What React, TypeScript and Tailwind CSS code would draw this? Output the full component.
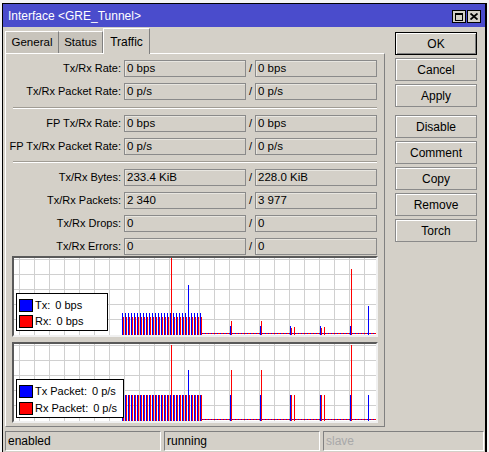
import React from "react";

type Bar = { x: number; top: number; c: "b" | "r" };

function makeBars(
  dense: { bTop: number; rTop: number; rSpike: number; bSpike: number },
  small: Bar[]
): Bar[] {
  const bars: Bar[] = [];
  for (let k = 0; k < 27; k++) {
    bars.push({ x: 108 + 3 * k, top: k === 22 ? dense.bSpike : dense.bTop, c: "b" });
    bars.push({ x: 109 + 3 * k, top: k === 16 ? dense.rSpike : dense.rTop, c: "r" });
  }
  return bars.concat(small);
}

const bars1 = makeBars(
  { bTop: 55, rTop: 59, rSpike: 0, bSpike: 27 },
  [
    { x: 216, top: 68, c: "b" },
    { x: 217, top: 63, c: "r" },
    { x: 246, top: 68, c: "b" },
    { x: 247, top: 63, c: "r" },
    { x: 276, top: 68, c: "b" },
    { x: 277, top: 70, c: "r" },
    { x: 280, top: 69, c: "r" },
    { x: 306, top: 68, c: "b" },
    { x: 307, top: 70, c: "r" },
    { x: 310, top: 69, c: "r" },
    { x: 336, top: 68, c: "b" },
    { x: 337, top: 11, c: "r" },
    { x: 354, top: 48, c: "b" },
  ]
);

const bars2 = makeBars(
  { bTop: 51, rTop: 51, rSpike: 1, bSpike: 26 },
  [
    { x: 216, top: 51, c: "b" },
    { x: 217, top: 26, c: "r" },
    { x: 246, top: 51, c: "b" },
    { x: 247, top: 26, c: "r" },
    { x: 276, top: 51, c: "b" },
    { x: 277, top: 51, c: "r" },
    { x: 280, top: 51, c: "r" },
    { x: 306, top: 51, c: "b" },
    { x: 307, top: 51, c: "r" },
    { x: 310, top: 51, c: "r" },
    { x: 336, top: 51, c: "b" },
    { x: 337, top: 1, c: "r" },
    { x: 354, top: 51, c: "b" },
  ]
);

function Chart({
  bars,
  legend,
}: {
  bars: Bar[];
  legend: { rows: [string, string][]; w: number; h: number; pitch: number };
}) {
  const W = 362;
  const H = 77;
  const vlines: number[] = [];
  for (let x = 5; x < W; x += 15) vlines.push(x);
  const hlines: number[] = [];
  for (let y = 1; y < H - 2; y += 15) hlines.push(y);
  return (
    <div className="ml-[6px] w-[366px] border-t-2 border-l-2 border-b-2 border-r-2 border-t-[#5a5a5a] border-l-[#5a5a5a] border-b-[#f0f0f0] border-r-[#f0f0f0]">
      <div className="relative h-[77px] w-[362px] bg-white">
        <svg width={W} height={H} className="block">
          {vlines.map((x) => (
            <rect key={"v" + x} x={x} y={0} width={1} height={H} fill="#d0d0d0" />
          ))}
          {hlines.map((y) => (
            <rect key={"h" + y} x={0} y={y} width={W} height={1} fill="#d0d0d0" />
          ))}
          <rect x={188} y={75} width={174} height={1} fill="#0000ff" />
          {Array.from({ length: 58 }).map((_, i) => (
            <rect key={"d" + i} x={189 + i * 3} y={75} width={2} height={1} fill="#ff0000" />
          ))}
          {bars.map((b, i) => (
            <rect
              key={i}
              x={b.x}
              y={b.top}
              width={1}
              height={H - b.top}
              fill={b.c === "b" ? "#0000ff" : "#ff0000"}
            />
          ))}
        </svg>
        <div
          className="absolute left-[2px] top-[35px] border border-black bg-white pl-[2px] pt-[3px]"
          style={{ width: legend.w, height: legend.h }}
        >
          {legend.rows.map(([label, val], i) => (
            <div
              key={i}
              className="flex items-center"
              style={{ height: legend.pitch }}
            >
              <div
                className={
                  "h-[13px] w-[14px] border border-black " +
                  (i === 0 ? "bg-[#0000ff]" : "bg-[#ff0000]")
                }
              />
              <span className="ml-[2px] whitespace-pre text-[11px] leading-none text-black">
                {label}
              </span>
              <span className="ml-[5px] whitespace-pre text-[11px] leading-none text-black">
                {val}
              </span>
            </div>
          ))}
        </div>
      </div>
    </div>
  );
}

function Field({ children }: { children?: React.ReactNode }) {
  return (
    <div className="flex h-[17px] w-[122px] items-center border border-[#8a8a8a] bg-[#d4d0c8] pl-[2px] text-[11.5px] text-black shadow-[inset_1px_1px_0_#e8e6e0]">
      {children}
    </div>
  );
}

function Row({ label, a, b, mt }: { label: string; a: string; b: string; mt: string }) {
  return (
    <div className={"flex h-[17px] items-center " + mt}>
      <div className="w-[115px] text-right text-black">{label}</div>
      <div className="w-[3px]" />
      <Field>{a}</Field>
      <div className="flex w-[9px] justify-center text-black">/</div>
      <Field>{b}</Field>
    </div>
  );
}

function Sep({ mt }: { mt: string }) {
  return (
    <div className={"ml-[7px] w-[364px] " + mt}>
      <div className="h-[1px] bg-[#a09c94]" />
      <div className="h-[1px] bg-white" />
    </div>
  );
}

function Btn({ label, def, mt }: { label: string; def?: boolean; mt?: string }) {
  return (
    <div
      className={
        "flex h-[23px] w-[82px] items-center justify-center bg-[#d4d0c8] text-black " +
        (def
          ? "border border-black shadow-[inset_1px_1px_0_#ffffff,inset_-1px_-1px_0_#808080]"
          : "border border-[#8a8a8a] shadow-[inset_1px_1px_0_#ffffff]") +
        " " +
        (mt || "")
      }
    >
      {label}
    </div>
  );
}

export default function App() {
  return (
    <div className="h-[452px] w-[489px] overflow-hidden bg-[#f4f4f4] pt-[3px] font-['Liberation_Sans',Arial,sans-serif] text-[11px]">
      <div className="ml-[2px] flex h-[449px] w-[485px] flex-col border-t border-l border-r-2 border-black bg-[#d4d0c8]">
        {/* title bar */}
        <div className="flex h-[23px] items-center bg-[#4a4ccc] pl-[5px]">
          <span className="text-[12px] text-white">Interface &lt;GRE_Tunnel&gt;</span>
          <div className="ml-auto mr-[4px] mt-[2px] flex gap-[1px]">
            <div className="flex h-[13px] w-[14px] items-center justify-center border border-black bg-[#d4d0c8]">
              <div className="h-[8px] w-[8px] border border-black border-t-2" />
            </div>
            <div className="flex h-[13px] w-[14px] items-center justify-center border border-black bg-[#d4d0c8]">
              <svg width="8" height="7" viewBox="0 0 8 7">
                <path d="M0.5 0.5 L7.5 6.5 M7.5 0.5 L0.5 6.5" stroke="#000" strokeWidth="1.8" />
              </svg>
            </div>
          </div>
        </div>

        <div className="flex pl-[2px]">
          {/* left column */}
          <div className="flex w-[380px] flex-col">
            <div className="flex h-[26px] items-end">
              <div className="flex h-[22px] w-[54px] items-center justify-center border-t border-l border-t-white border-l-white border-r border-r-[#808080] bg-[#c8c4bc] text-[11.5px] text-black">
                General
              </div>
              <div className="flex h-[22px] w-[44px] items-center justify-center border-t border-t-white border-r border-r-[#808080] bg-[#c8c4bc] text-[11.5px] text-black">
                Status
              </div>
              <div className="relative z-10 -mb-[1px] flex h-[26px] w-[47px] items-start justify-center border-t border-l border-r border-t-white border-l-white border-r-[#808080] bg-[#d4d0c8] pt-[4px] text-[12px] text-black">
                Traffic
              </div>
            </div>
            <div className="flex h-[374px] flex-col border border-t-white border-l-white border-r-[#808080] border-b-[#808080] pt-[6px]">
              <Row label="Tx/Rx Rate:" a="0 bps" b="0 bps" mt="" />
              <Row label="Tx/Rx Packet Rate:" a="0 p/s" b="0 p/s" mt="mt-[6px]" />
              <Sep mt="mt-[7px]" />
              <Row label="FP Tx/Rx Rate:" a="0 bps" b="0 bps" mt="mt-[6px]" />
              <Row label="FP Tx/Rx Packet Rate:" a="0 p/s" b="0 p/s" mt="mt-[6px]" />
              <Sep mt="mt-[6px]" />
              <Row label="Tx/Rx Bytes:" a="233.4 KiB" b="228.0 KiB" mt="mt-[6px]" />
              <Row label="Tx/Rx Packets:" a="2 340" b="3 977" mt="mt-[6px]" />
              <Row label="Tx/Rx Drops:" a="0" b="0" mt="mt-[6px]" />
              <Row label="Tx/Rx Errors:" a="0" b="0" mt="mt-[6px]" />
              <div className="mt-[1px]">
                <Chart
                  bars={bars1}
                  legend={{
                    rows: [
                      ["Tx:", "0 bps"],
                      ["Rx:", "0 bps"],
                    ],
                    w: 92,
                    h: 38,
                    pitch: 16,
                  }}
                />
              </div>
              <div className="mt-[5px]">
                <Chart
                  bars={bars2}
                  legend={{
                    rows: [
                      ["Tx Packet:", "0 p/s"],
                      ["Rx Packet:", "0 p/s"],
                    ],
                    w: 108,
                    h: 39,
                    pitch: 17,
                  }}
                />
              </div>
            </div>
          </div>
          {/* right column */}
          <div className="ml-[10px] flex flex-col gap-[3px] pt-[5px] text-[12px]">
            <Btn label="OK" def />
            <Btn label="Cancel" />
            <Btn label="Apply" />
            <Btn label="Disable" mt="mt-[5px]" />
            <Btn label="Comment" />
            <Btn label="Copy" />
            <Btn label="Remove" />
            <Btn label="Torch" />
          </div>
        </div>

        {/* status bar */}
        <div className="mt-[4px] flex gap-[3px] pl-[2px] text-[12px]">
          <div className="flex h-[20px] w-[156px] items-center border border-t-[#808080] border-l-[#808080] border-b-white border-r-white pl-[2px] text-black">
            enabled
          </div>
          <div className="flex h-[20px] w-[156px] items-center border border-t-[#808080] border-l-[#808080] border-b-white border-r-white pl-[2px] text-black">
            running
          </div>
          <div className="flex h-[20px] w-[161px] items-center border border-t-[#808080] border-l-[#808080] border-b-white border-r-white pl-[2px] text-[#a8a8a8]">
            slave
          </div>
        </div>
      </div>
    </div>
  );
}
